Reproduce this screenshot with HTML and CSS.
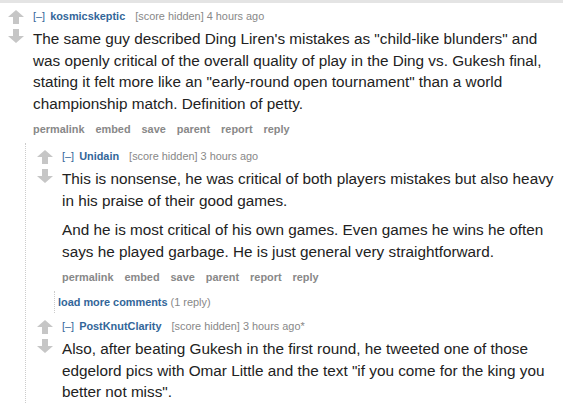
FILE: index.html
```html
<!DOCTYPE html>
<html lang="en">
  <head>
    <meta charset="UTF-8" />
    <meta name="viewport" content="width=device-width, initial-scale=1.0" />
    <title>Comments</title>
    <link rel="stylesheet" href="styles.css">
  </head>
  <body>
    <div class="topbar"></div>

    <!-- top level comment -->
    <div class="comment">
      <div class="midcol">
        <svg class="arrow" viewBox="0 0 16 14"><path d="M8 0 L16 7 L11 7 L11 14 L5 14 L5 7 L0 7 Z" /></svg>
        <svg class="arrow" viewBox="0 0 16 14"><path d="M8 14 L16 7 L11 7 L11 0 L5 0 L5 7 L0 7 Z" /></svg>
      </div>
      <div class="entry">
        <p class="tagline">
          <a class="expand">[–]</a>
          <a class="author">kosmicskeptic</a>
          <span class="score">[score hidden]</span> 4 hours ago
        </p>
        <div class="md">
          <p>The same guy described Ding Liren's mistakes as "child-like blunders" and was openly critical of the overall quality of play in the Ding vs. Gukesh final, stating it felt more like an "early-round open tournament" than a world championship match. Definition of petty.</p>
        </div>
        <ul class="buttons">
          <li>permalink</li>
          <li>embed</li>
          <li>save</li>
          <li>parent</li>
          <li>report</li>
          <li>reply</li>
        </ul>
      </div>

      <div class="child">
        <div class="comment">
          <div class="midcol">
            <svg class="arrow" viewBox="0 0 16 14"><path d="M8 0 L16 7 L11 7 L11 14 L5 14 L5 7 L0 7 Z" /></svg>
            <svg class="arrow" viewBox="0 0 16 14"><path d="M8 14 L16 7 L11 7 L11 0 L5 0 L5 7 L0 7 Z" /></svg>
          </div>
          <div class="entry">
            <p class="tagline">
              <a class="expand">[–]</a>
              <a class="author">Unidain</a>
              <span class="score">[score hidden]</span> 3 hours ago
            </p>
            <div class="md">
              <p>This is nonsense, he was critical of both players mistakes but also heavy in his praise of their good games.</p>
              <p>And he is most critical of his own games. Even games he wins he often says he played garbage. He is just general very straightforward.</p>
            </div>
            <ul class="buttons">
              <li>permalink</li>
              <li>embed</li>
              <li>save</li>
              <li>parent</li>
              <li>report</li>
              <li>reply</li>
            </ul>
          </div>
          <div class="child">
            <div class="morechildren">
              <a class="more">load more comments</a> <span class="gray">(1 reply)</span>
            </div>
          </div>
        </div>

        <div class="comment">
          <div class="midcol">
            <svg class="arrow" viewBox="0 0 16 14"><path d="M8 0 L16 7 L11 7 L11 14 L5 14 L5 7 L0 7 Z" /></svg>
            <svg class="arrow" viewBox="0 0 16 14"><path d="M8 14 L16 7 L11 7 L11 0 L5 0 L5 7 L0 7 Z" /></svg>
          </div>
          <div class="entry">
            <p class="tagline">
              <a class="expand">[–]</a>
              <a class="author">PostKnutClarity</a>
              <span class="score">[score hidden]</span> 3 hours ago*
            </p>
            <div class="md">
              <p>Also, after beating Gukesh in the first round, he tweeted one of those edgelord pics with Omar Little and the text "if you come for the king you better not miss".</p>
            </div>
          </div>
        </div>
      </div>
    </div>
  </body>
</html>
```

FILE: styles.css
```css
body {
  font-family: "Liberation Sans", Arial, sans-serif;
  background: #fff;
  margin: 0;
  padding: 0;
  color: #222;
}
.topbar {
  height: 3px;
  background-color: #e4e4e4;
}
.comment {
  display: grid;
  grid-template-columns: 25px 1fr;
  padding-left: 8px;
}
.midcol {
  display: flex;
  flex-direction: column;
  gap: 5px;
  padding-top: 7px;
}
.arrow {
  width: 16px;
  height: 14px;
  fill: #c6c6c6;
}
.entry {
  min-width: 0;
}
.tagline {
  margin: 6px 0 0;
  font-size: 10.9px;
  line-height: 15px;
  color: #888;
}
.tagline .expand {
  color: #369;
  margin-right: 2px;
}
.tagline .author {
  color: #369;
  font-weight: bold;
  margin-right: 7px;
}
.md {
  font-size: 15.3px;
  line-height: 21.5px;
  margin-top: 4px;
}
.md p {
  margin: 0 0 8px;
}
.md p:last-child {
  margin-bottom: 0;
}
.buttons {
  list-style: none;
  margin: 8px 0 0;
  padding: 0;
  display: flex;
  gap: 11px;
  font-size: 10.9px;
  line-height: 15px;
  font-weight: bold;
  color: #888;
}
.child {
  grid-column: 1 / 3;
  border-left: 1px dotted #ccc;
  margin-left: 17px;
  margin-top: 6px;
  padding-left: 3px;
}
.morechildren {
  font-size: 10.9px;
  padding: 5px 0;
}
.more {
  color: #369;
  font-weight: bold;
}
.gray {
  color: #888;
}
```
